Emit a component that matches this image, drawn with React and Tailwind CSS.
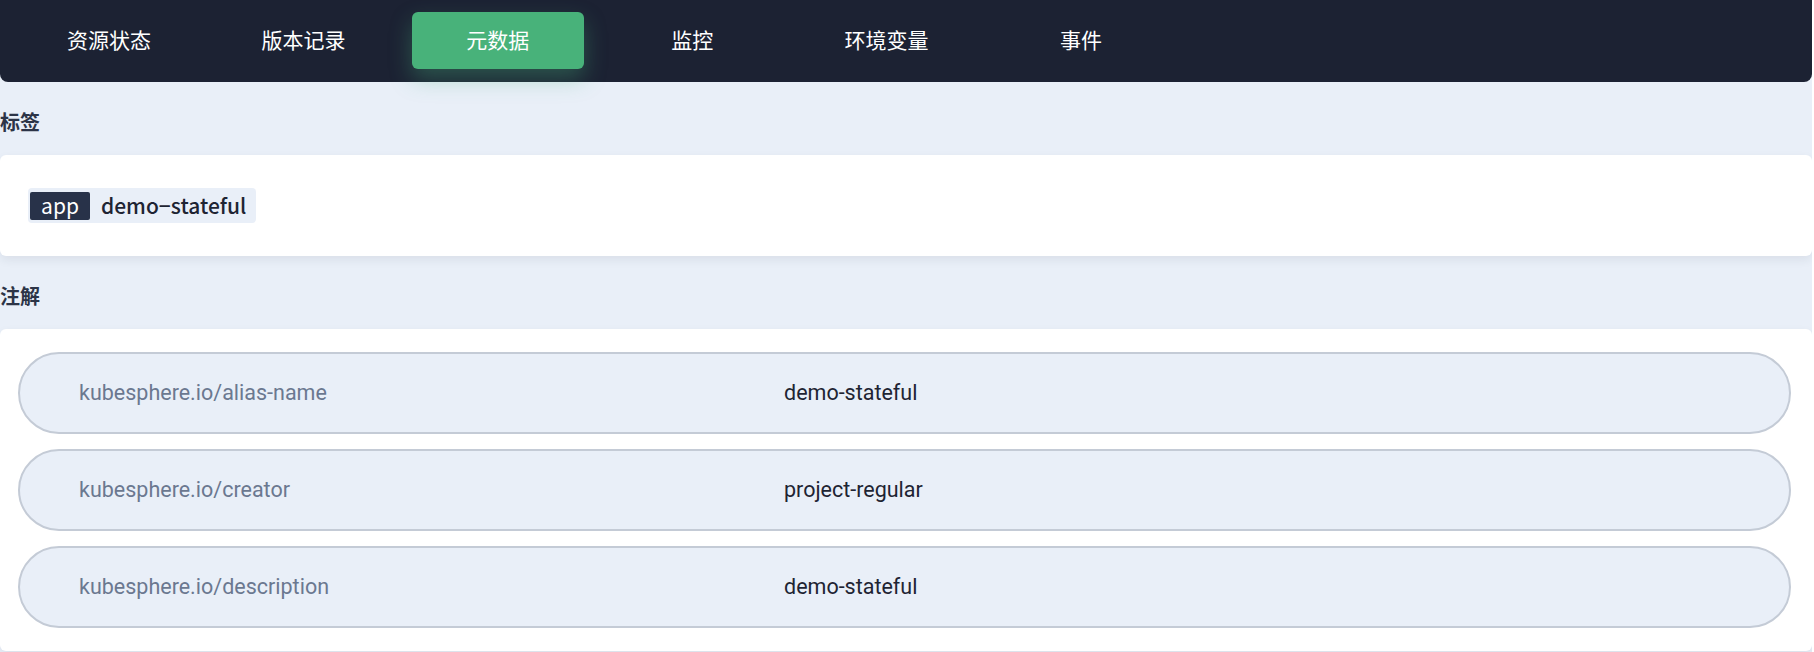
import React from "react";

const tabs = ["资源状态", "版本记录", "元数据", "监控", "环境变量", "事件"];
const annotations = [
  ["kubesphere.io/alias-name", "demo-stateful"],
  ["kubesphere.io/creator", "project-regular"],
  ["kubesphere.io/description", "demo-stateful"],
];

const cjk = { fontFamily: '"Noto Sans CJK SC", "Noto Sans", sans-serif' };
const roboto = { fontFamily: 'Roboto, "Noto Sans CJK SC", sans-serif' };

export default function App() {
  return (
    <div className="w-[1812px] h-[652px] bg-[#e9eff8] overflow-hidden" style={cjk}>
      <nav className="h-[82px] bg-[#1c2233] rounded-b-[8px] flex items-center pl-[23px] gap-[22.4px] pb-[2px]">
        {tabs.map((t) => (
          <div
            key={t}
            className={
              "w-[172px] h-[57px] flex items-center justify-center text-[21px] text-white rounded-[6px] " +
              (t === "元数据" ? "bg-[#48b27a] shadow-[0_10px_22px_rgba(72,178,122,0.35)]" : "")
            }
          >
            {t}
          </div>
        ))}
      </nav>

      <div className="h-[73px] flex items-center text-[20px] font-semibold text-[#2c3447] pt-[6px]">标签</div>
      <div className="h-[101px] bg-white rounded-[6px] shadow-[0_4px_10px_rgba(36,46,66,0.08)] flex items-center pl-[28px]">
        <div className="h-[35px] bg-[#e9eff8] rounded-[4px] flex items-center pl-[2px] pr-[10px]">
          <span className="h-[28px] w-[60px] bg-[#283249] text-white text-[21px] flex items-center justify-center rounded-[2px]">
            app
          </span>
          <span className="ml-[11px] text-[21px] font-medium text-[#1e2433]">demo−stateful</span>
        </div>
      </div>

      <div className="h-[73px] flex items-center text-[20px] font-semibold text-[#2c3447] pt-[7px]">注解</div>
      <div className="bg-white rounded-[6px] shadow-[0_4px_10px_rgba(36,46,66,0.08)] pt-[23px] pb-[23px] pl-[18px] pr-[21px] flex flex-col gap-[15px]">
        {annotations.map(([k, v]) => (
          <div
            key={k}
            className="h-[82px] rounded-full border-2 border-[#c4cbd6] bg-[#e9eff8] flex items-center text-[21.5px]"
            style={roboto}
          >
            <span className="w-[764px] pl-[59px] text-[#6b7890]">{k}</span>
            <span className="text-[#1e2433]">{v}</span>
          </div>
        ))}
      </div>
    </div>
  );
}
